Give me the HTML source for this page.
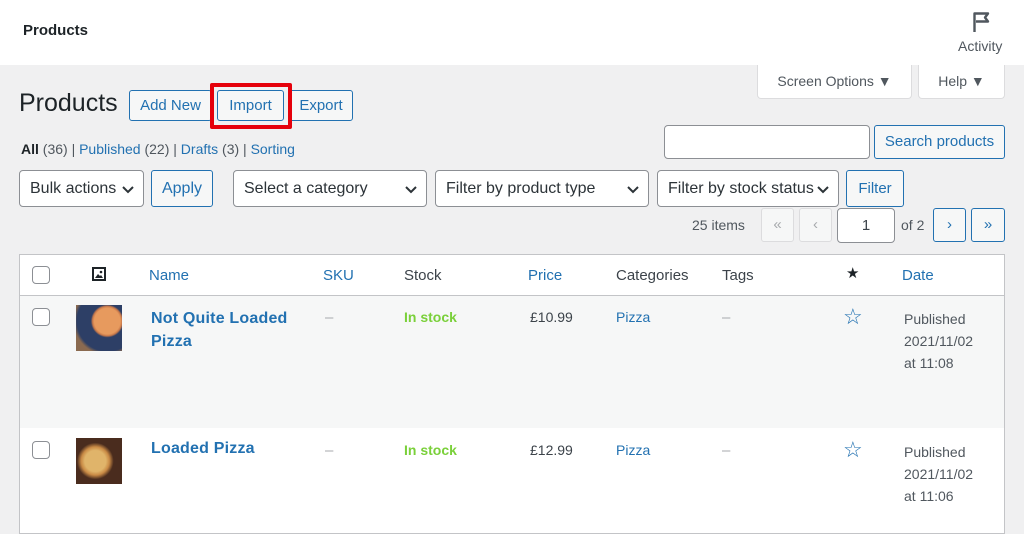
<!DOCTYPE html>
<html><head><style>
*{box-sizing:border-box;margin:0;padding:0}
body{width:1024px;height:527px;overflow:hidden;background:#f0f0f1;font-family:"Liberation Sans",sans-serif;color:#3c434a;position:relative;font-size:15px}
.a{position:absolute;white-space:nowrap}
.top{left:0;top:0;width:1024px;height:65px;background:#fff}
.btn{position:absolute;border:1px solid #2271b1;background:#f6f7f7;color:#2271b1;border-radius:3px;text-align:center;font-size:15px}
.sel{position:absolute;border:1px solid #8c8f94;background:#fff;border-radius:4px;font-size:16px;color:#2c3338;padding-left:10px}
.sel svg{position:absolute;right:9px;top:15px}
.blue{color:#2271b1}
.cb{position:absolute;width:18px;height:18px;border:1px solid #8c8f94;border-radius:4px;background:#fff}
</style></head><body>
<div class="a top"></div>
<div class="a" style="left:23px;top:22px;font-size:15px;font-weight:bold;color:#1d2327">Products</div>
<svg class="a" style="left:972px;top:11px" width="20" height="22" viewBox="0 0 20 22"><path d="M2.5 21V2.5H16l-3 4 3 4H4" fill="none" stroke="#50575e" stroke-width="2.4" stroke-linejoin="round"/></svg>
<div class="a" style="left:958px;top:38px;font-size:14px;color:#50575e">Activity</div>
<div class="a" style="left:757px;top:65px;width:155px;height:34px;background:#fff;border:1px solid #dcdcde;border-top:0;border-radius:0 0 4px 4px;font-size:14px;color:#50575e;text-align:center;line-height:32px">Screen Options ▼</div>
<div class="a" style="left:918px;top:65px;width:87px;height:34px;background:#fff;border:1px solid #dcdcde;border-top:0;border-radius:0 0 4px 4px;font-size:14px;color:#50575e;text-align:center;line-height:32px">Help ▼</div>
<div class="a" style="left:19px;top:89px;font-size:25px;color:#1d2327">Products</div>
<div class="btn" style="left:129px;top:90px;width:83px;height:31px;line-height:29px">Add New</div>
<div class="btn" style="left:217px;top:90px;width:67px;height:31px;line-height:29px">Import</div>
<div class="btn" style="left:289px;top:90px;width:64px;height:31px;line-height:29px">Export</div>
<div class="a" style="left:210px;top:83px;width:82px;height:46px;border:4px solid #e5000b;border-radius:2px"></div>
<div class="a" style="left:21px;top:141px;font-size:14px;color:#50575e"><b style="color:#1d2327">All</b> (36) | <span class="blue">Published</span> (22) | <span class="blue">Drafts</span> (3) | <span class="blue">Sorting</span></div>
<div class="a" style="left:664px;top:125px;width:206px;height:34px;background:#fff;border:1px solid #8c8f94;border-radius:4px"></div>
<div class="btn" style="left:874px;top:125px;width:131px;height:34px;line-height:32px">Search products</div>
<div class="sel" style="left:19px;top:170px;width:125px;height:37px;line-height:35px">Bulk actions<svg width="12" height="8" viewBox="0 0 12 8"><path d="M1 1l5 5 5-5" fill="none" stroke="#2c3338" stroke-width="2"/></svg></div>
<div class="btn" style="left:151px;top:170px;width:62px;height:37px;line-height:35px;font-size:16px">Apply</div>
<div class="sel" style="left:233px;top:170px;width:194px;height:37px;line-height:35px">Select a category<svg width="12" height="8" viewBox="0 0 12 8"><path d="M1 1l5 5 5-5" fill="none" stroke="#2c3338" stroke-width="2"/></svg></div>
<div class="sel" style="left:435px;top:170px;width:214px;height:37px;line-height:35px">Filter by product type<svg width="12" height="8" viewBox="0 0 12 8"><path d="M1 1l5 5 5-5" fill="none" stroke="#2c3338" stroke-width="2"/></svg></div>
<div class="sel" style="left:657px;top:170px;width:182px;height:37px;line-height:35px">Filter by stock status<svg width="12" height="8" viewBox="0 0 12 8"><path d="M1 1l5 5 5-5" fill="none" stroke="#2c3338" stroke-width="2"/></svg></div>
<div class="btn" style="left:846px;top:170px;width:58px;height:37px;line-height:35px">Filter</div>
<div class="a" style="left:692px;top:217px;font-size:14px;color:#50575e">25 items</div>
<div class="a" style="left:761px;top:208px;width:33px;height:34px;border:1px solid #dcdcde;background:#f6f7f7;color:#a7aaad;text-align:center;line-height:32px;border-radius:3px">«</div>
<div class="a" style="left:799px;top:208px;width:33px;height:34px;border:1px solid #dcdcde;background:#f6f7f7;color:#a7aaad;text-align:center;line-height:32px;border-radius:3px">‹</div>
<div class="a" style="left:837px;top:208px;width:58px;height:35px;border:1px solid #8c8f94;background:#fff;text-align:center;line-height:33px;border-radius:4px">1</div>
<div class="a" style="left:901px;top:217px;font-size:14px;color:#50575e">of 2</div>
<div class="btn" style="left:933px;top:208px;width:33px;height:34px;line-height:32px">›</div>
<div class="btn" style="left:971px;top:208px;width:34px;height:34px;line-height:32px">»</div>
<div class="a" style="left:19px;top:254px;width:986px;height:280px;background:#fff;border:1px solid #c3c4c7"></div>
<div class="a" style="left:20px;top:295px;width:984px;height:1px;background:#c3c4c7"></div>
<div class="a" style="left:20px;top:296px;width:984px;height:132px;background:#f6f7f7"></div>
<div class="cb" style="left:32px;top:266px"></div>
<svg class="a" style="left:92px;top:267px" width="14" height="14" viewBox="0 0 14 14"><rect x="0" y="0" width="14" height="14" fill="#1d2327"/><rect x="2" y="2" width="10" height="10" fill="#fff"/><path d="M3 11l3-4 2 2 1-1 2 3z" fill="#1d2327"/><circle cx="9" cy="5" r="1.3" fill="#1d2327"/></svg>
<div class="a blue" style="left:149px;top:267px">Name</div>
<div class="a blue" style="left:323px;top:267px">SKU</div>
<div class="a" style="left:404px;top:267px">Stock</div>
<div class="a blue" style="left:528px;top:267px">Price</div>
<div class="a" style="left:616px;top:267px">Categories</div>
<div class="a" style="left:722px;top:267px">Tags</div>
<div class="a" style="left:846px;top:264px;color:#1d2327">★</div>
<div class="a blue" style="left:902px;top:267px">Date</div>
<div class="cb" style="left:32px;top:308px"></div>
<div class="a" style="left:76px;top:305px;width:46px;height:46px;background:radial-gradient(circle at 68% 35%,#e79a5e 0 30%,#c9794a 34%,#2d3f66 38% 70%,#8a6a50 78%),#8a6a50"></div>
<div class="a blue" style="left:151px;top:307px;font-weight:bold;line-height:23px;white-space:normal;width:150px;font-size:16px;letter-spacing:0.2px">Not Quite Loaded Pizza</div>
<div class="a" style="left:325px;top:309px;color:#a7aaad">–</div>
<div class="a" style="left:404px;top:309px;color:#7ad03a;font-weight:bold;font-size:14px">In stock</div>
<div class="a" style="left:530px;top:309px;font-size:14px">£10.99</div>
<div class="a blue" style="left:616px;top:309px;font-size:14px">Pizza</div>
<div class="a" style="left:722px;top:309px;color:#a7aaad">–</div>
<div class="a blue" style="left:843px;top:304px;font-size:22px">☆</div>
<div class="a" style="left:904px;top:308px;font-size:14px;line-height:22px;color:#50575e">Published<br>2021/11/02<br>at 11:08</div>
<div class="cb" style="left:32px;top:441px"></div>
<div class="a" style="left:76px;top:438px;width:46px;height:46px;background:radial-gradient(circle at 42% 50%,#e0b46a 0 30%,#c98a45 40%,#4a2c1e 52%)"></div>
<div class="a blue" style="left:151px;top:440px;font-weight:bold;font-size:16px;letter-spacing:0.2px">Loaded Pizza</div>
<div class="a" style="left:325px;top:442px;color:#a7aaad">–</div>
<div class="a" style="left:404px;top:442px;color:#7ad03a;font-weight:bold;font-size:14px">In stock</div>
<div class="a" style="left:530px;top:442px;font-size:14px">£12.99</div>
<div class="a blue" style="left:616px;top:442px;font-size:14px">Pizza</div>
<div class="a" style="left:722px;top:442px;color:#a7aaad">–</div>
<div class="a blue" style="left:843px;top:437px;font-size:22px">☆</div>
<div class="a" style="left:904px;top:441px;font-size:14px;line-height:22px;color:#50575e">Published<br>2021/11/02<br>at 11:06</div>
</body></html>
